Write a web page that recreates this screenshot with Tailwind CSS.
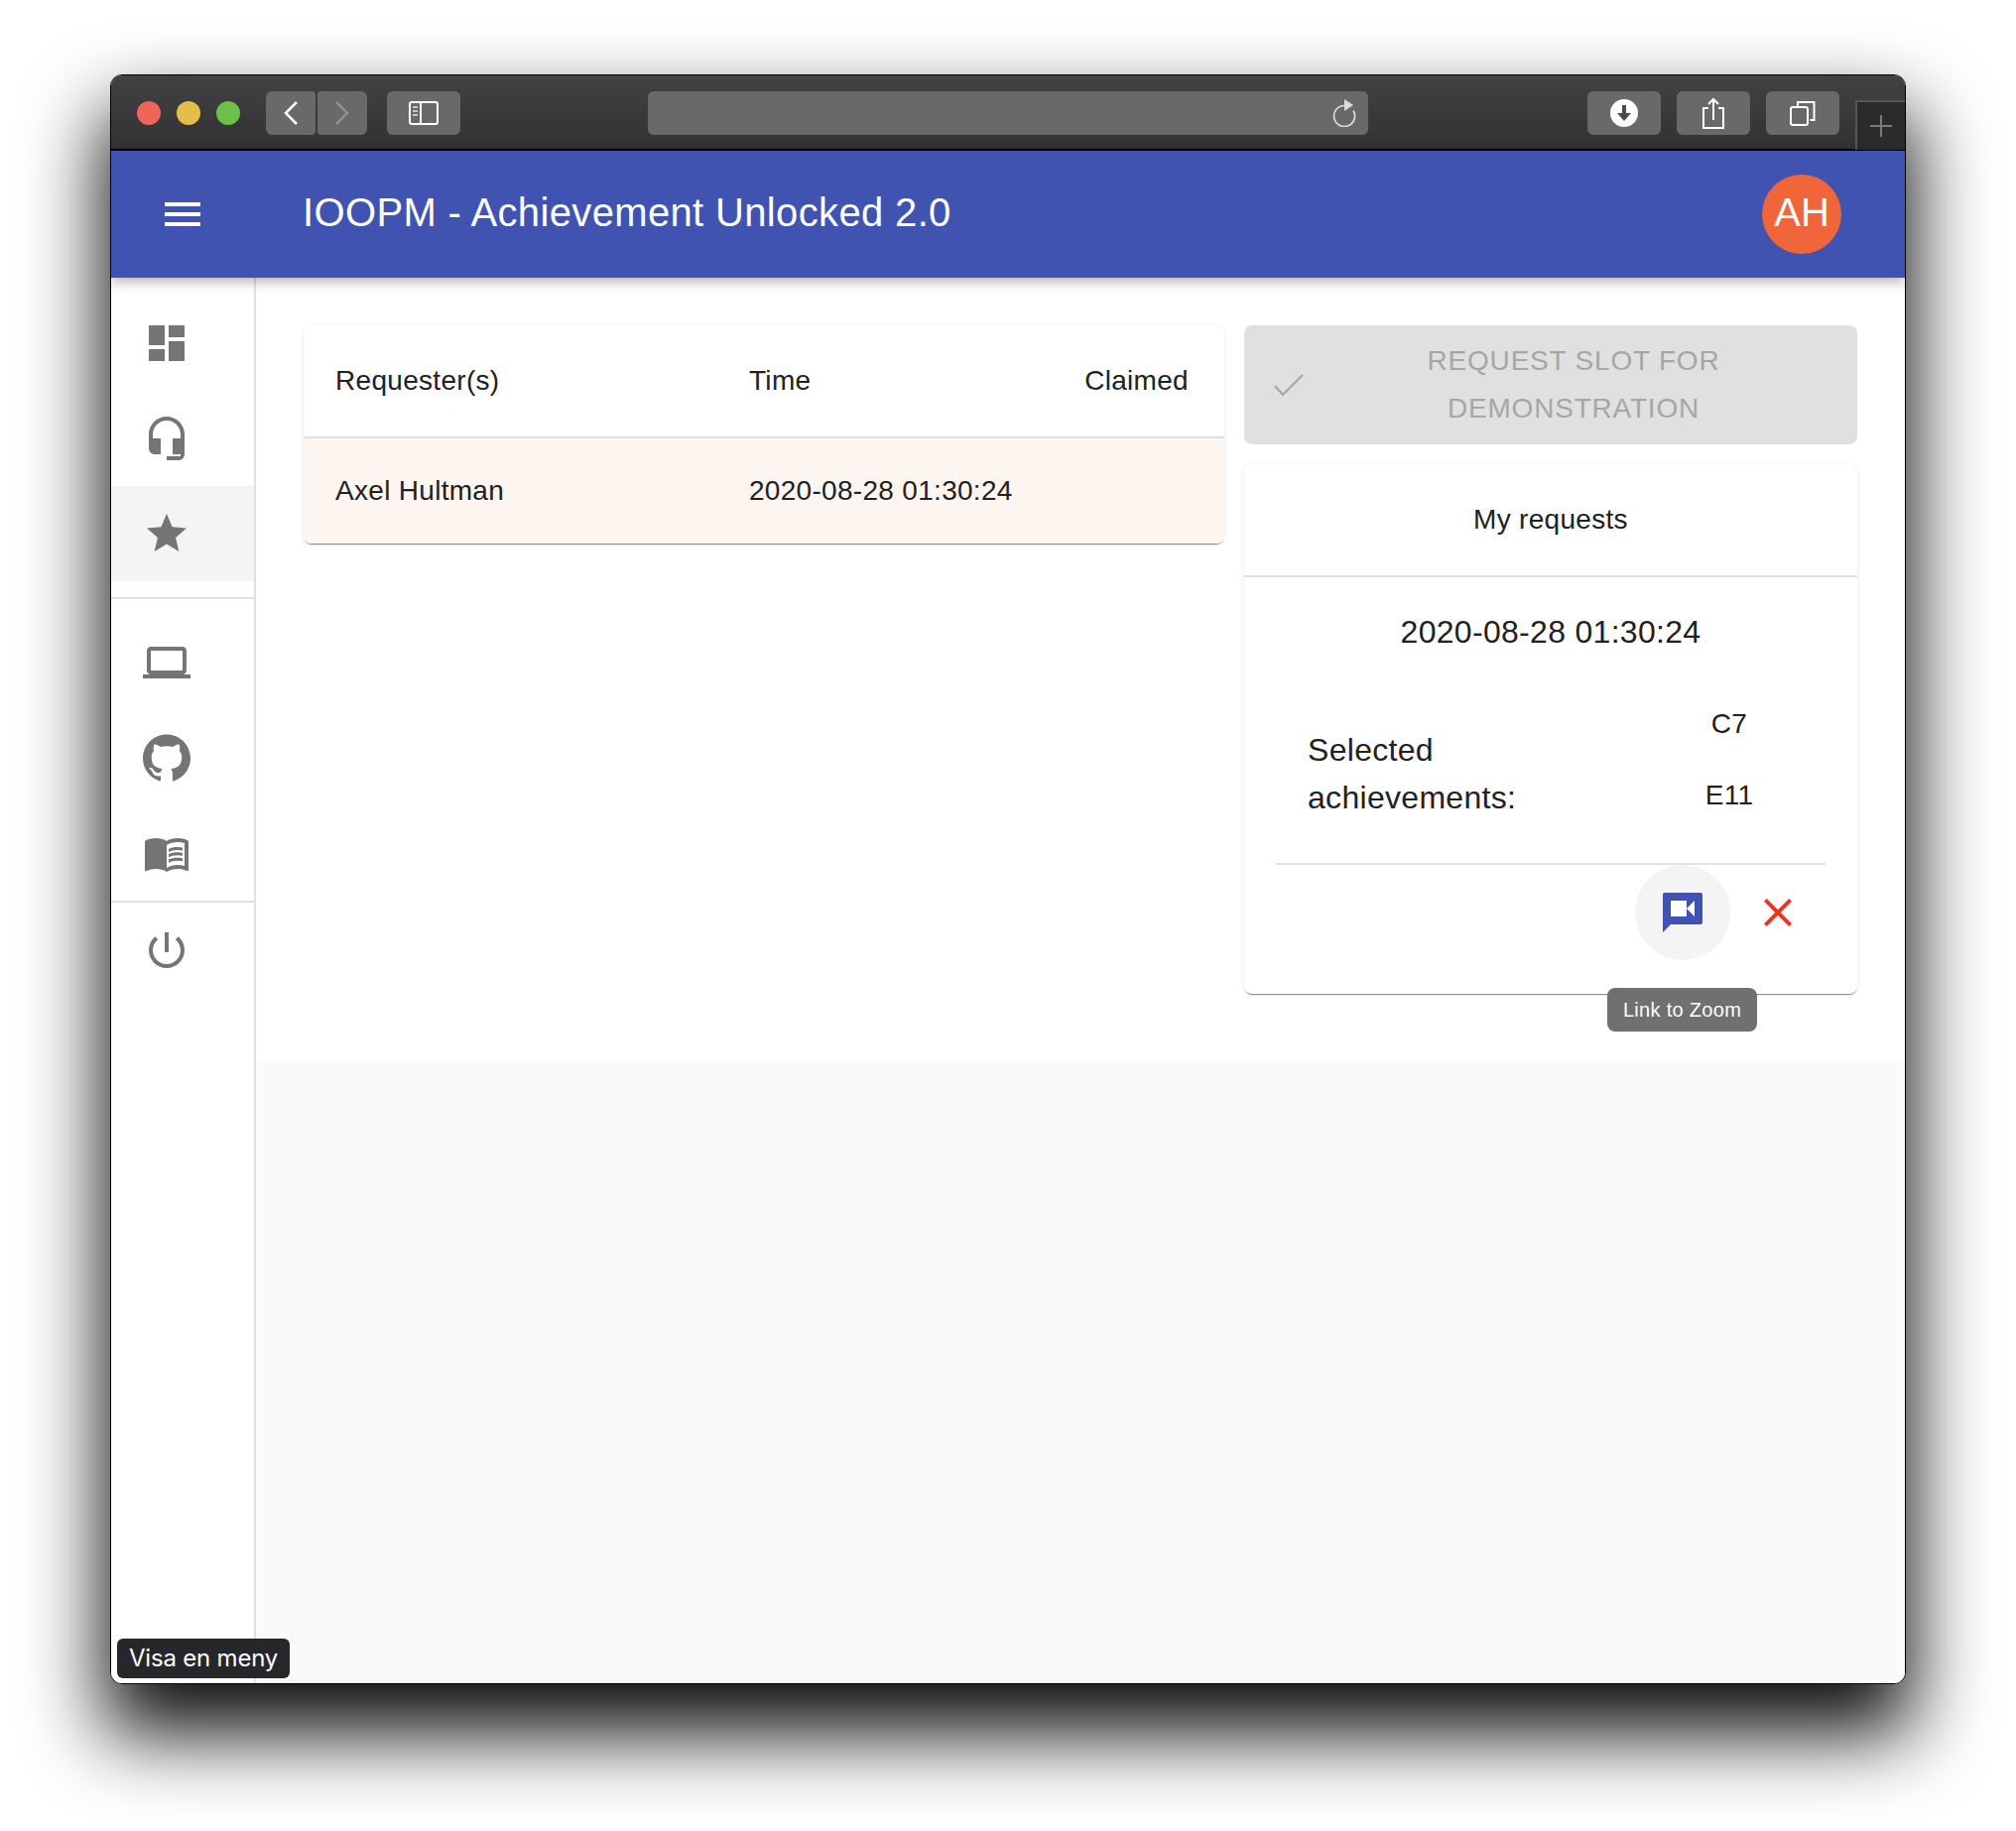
<!DOCTYPE html>
<html lang="en">
<head>
    <meta charset="UTF-8">
    <title>IOOPM - Achievement Unlocked 2.0</title>
    <script src="https://cdn.jsdelivr.net/npm/@tailwindcss/browser@4"></script>
</head>
<body class="bg-white w-[2032px] h-[1846px] overflow-hidden font-['Liberation_Sans',sans-serif] tracking-[0.3px] text-[#212121]">

    <div class="relative ml-[111px] mt-[75px] w-[1810px] h-[1623px] border border-black rounded-[12px] overflow-hidden bg-white flex flex-col shadow-[0_44px_80px_6px_rgba(0,0,0,0.95)]">

        <!-- Safari toolbar -->
        <div class="h-[76px] shrink-0 bg-gradient-to-b from-[#424244] to-[#323234] border-b-2 border-black flex items-start pt-4 pl-[26px] relative">
            <div class="w-6 h-6 mt-[10px] rounded-full bg-[#f0655a]"></div>
            <div class="w-6 h-6 mt-[10px] ml-4 rounded-full bg-[#e4be48]"></div>
            <div class="w-6 h-6 mt-[10px] ml-4 rounded-full bg-[#6cc04a]"></div>

            <div class="w-[50px] h-11 ml-[26px] rounded-l-md rounded-r-sm bg-[#69696b] flex items-center justify-center">
                <svg width="16" height="26" viewBox="0 0 16 26" fill="none" stroke="#fff" stroke-width="2.5"><path d="M14 2L3 13l11 11"/></svg>
            </div>
            <div class="w-[50px] h-11 ml-[2px] rounded-r-md rounded-l-sm bg-[#69696b] flex items-center justify-center">
                <svg width="16" height="26" viewBox="0 0 16 26" fill="none" stroke="#8f8f91" stroke-width="2.5"><path d="M2 2l11 11L2 24"/></svg>
            </div>
            <div class="w-[74px] h-11 ml-5 rounded-md bg-[#69696b] flex items-center justify-center">
                <svg width="30" height="24" viewBox="0 0 30 24" fill="none" stroke="#fff" stroke-width="2"><rect x="1" y="1" width="28" height="22" rx="2"/><path d="M12 1v22"/><path d="M4 6h5M4 10h5M4 14h5" stroke="#c8c8c8"/></svg>
            </div>

            <div class="w-[726px] h-11 ml-[189px] rounded-md bg-[#69696b] flex items-center justify-end pr-3">
                <svg width="24" height="28" viewBox="0 0 24 28" fill="none" stroke="#dcdcdc" stroke-width="1.7"><path d="M12 6.500A10.500 10.500 0 1 0 21 11.500"/><path d="M12 0l9 6-9 6z" fill="#dcdcdc" stroke="none"/></svg>
            </div>

            <div class="w-[74px] h-11 ml-[221px] rounded-md bg-[#69696b] flex items-center justify-center">
                <svg width="28" height="28" viewBox="0 0 28 28"><circle cx="14" cy="14" r="14" fill="#fff"/><path d="M12 6h4v8h5l-7 8-7-8h5z" fill="#4b4b4d"/></svg>
            </div>
            <div class="w-[74px] h-11 ml-4 rounded-md bg-[#69696b] flex items-center justify-center">
                <svg width="24" height="32" viewBox="0 0 24 32" fill="none" stroke="#fff" stroke-width="2"><path d="M7 11H2v20h20V11h-5"/><path d="M12 23V2M7 7l5-5 5 5"/></svg>
            </div>
            <div class="w-[74px] h-11 ml-4 rounded-md bg-[#69696b] flex items-center justify-center">
                <svg width="26" height="26" viewBox="0 0 26 26" fill="none" stroke="#fff" stroke-width="2"><rect x="1" y="7" width="17" height="18" rx="2"/><path d="M8 6V2h16.500v18h-4"/></svg>
            </div>

            <div class="absolute right-0 top-[25px] w-[50px] h-[50px] bg-[#2b2b2c] border-l-2 border-t-2 border-[#565658] flex items-center justify-center">
                <svg width="22" height="22" viewBox="0 0 22 22" stroke="#7a7a7c" stroke-width="2"><path d="M11 0v22M0 11h22"/></svg>
            </div>
        </div>

        <!-- App bar -->
        <header class="h-[128px] shrink-0 bg-[#4053b0] relative z-10 flex items-center pl-12 pr-16 shadow-[0_4px_12px_rgba(0,0,0,0.3)]">
            <svg width="48" height="48" viewBox="0 0 24 24" fill="#fff"><path d="M3 18h18v-2H3v2zm0-5h18v-2H3v2zm0-7v2h18V6H3z"/></svg>
            <h1 class="ml-[97px] mb-1 text-[40px] leading-none font-normal text-white tracking-[0.35px]">IOOPM - Achievement Unlocked 2.0</h1>
            <div class="ml-auto w-20 h-20 pb-1 rounded-full bg-[#f06539] text-white text-[40px] flex items-center justify-center tracking-normal">AH</div>
        </header>

        <div class="flex flex-1 min-h-0">
            <!-- Sidebar -->
            <nav class="w-[146px] shrink-0 bg-white border-r-2 border-[#e0e0e0] pt-[18px]">
                <div class="h-24 pl-8 flex items-center">
                    <svg width="48" height="48" viewBox="0 0 24 24" fill="#757575"><path d="M3 13h8V3H3v10zm0 8h8v-6H3v6zm10 0h8V11h-8v10zm0-18v6h8V3h-8z"/></svg>
                </div>
                <div class="h-24 pl-8 flex items-center">
                    <svg width="48" height="48" viewBox="0 0 24 24" fill="#757575"><path d="M12 1c-4.970 0-9 4.030-9 9v7c0 1.660 1.340 3 3 3h3v-8H5v-2c0-3.870 3.130-7 7-7s7 3.130 7 7v2h-4v8h4v1h-7v2h6c1.660 0 3-1.340 3-3V10c0-4.970-4.030-9-9-9z"/></svg>
                </div>
                <div class="h-24 pl-8 flex items-center bg-[#f4f4f4]">
                    <svg width="48" height="48" viewBox="0 0 24 24" fill="#757575"><path d="M12 17.270L18.180 21l-1.640-7.030L22 9.240l-7.190-.610L12 2 9.190 8.630 2 9.240l5.460 4.730L5.820 21z"/></svg>
                </div>
                <div class="h-[2px] bg-[#e0e0e0] my-4"></div>
                <div class="h-24 pl-8 flex items-center">
                    <svg width="48" height="48" viewBox="0 0 24 24" fill="#757575"><path d="M20 18c1.100 0 1.990-.9 1.990-2L22 6c0-1.100-.9-2-2-2H4c-1.100 0-2 .9-2 2v10c0 1.100.9 2 2 2H0v2h24v-2h-4zM4 6h16v10H4V6z"/></svg>
                </div>
                <div class="h-24 pl-8 flex items-center">
                    <svg width="48" height="48" viewBox="0 0 24 24" fill="#757575"><path d="M12 .297c-6.630 0-12 5.373-12 12 0 5.303 3.438 9.800 8.205 11.385.6.113.82-.258.82-.577 0-.285-.01-1.040-.015-2.040-3.338.724-4.042-1.610-4.042-1.610C4.422 18.070 3.633 17.700 3.633 17.700c-1.087-.744.084-.729.084-.729 1.205.084 1.838 1.236 1.838 1.236 1.070 1.835 2.809 1.305 3.495.998.108-.776.417-1.305.76-1.605-2.665-.3-5.466-1.332-5.466-5.930 0-1.310.465-2.380 1.235-3.220-.135-.303-.54-1.523.105-3.176 0 0 1.005-.322 3.300 1.230.96-.267 1.980-.399 3-.405 1.020.006 2.040.138 3 .405 2.280-1.552 3.285-1.230 3.285-1.230.645 1.653.24 2.873.12 3.176.765.84 1.230 1.910 1.230 3.220 0 4.610-2.805 5.625-5.475 5.920.42.36.81 1.096.81 2.220 0 1.606-.015 2.896-.015 3.286 0 .315.21.69.825.57C20.565 22.092 24 17.592 24 12.297c0-6.627-5.373-12-12-12"/></svg>
                </div>
                <div class="h-24 pl-8 flex items-center">
                    <svg width="48" height="48" viewBox="0 0 24 24" fill="#757575"><path d="M21 5c-1.110-.35-2.330-.5-3.500-.5-1.950 0-4.050.4-5.500 1.500-1.450-1.100-3.550-1.500-5.500-1.500S2.450 4.900 1 6v14.650c0 .25.25.5.5.5.1 0 .15-.05.25-.05C3.100 20.450 5.050 20 6.500 20c1.950 0 4.050.4 5.500 1.500 1.350-.85 3.800-1.500 5.500-1.500 1.650 0 3.350.3 4.750 1.050.1.05.15.05.25.05.25 0 .5-.25.5-.5V6c-.6-.45-1.250-.75-2-1zm0 13.500c-1.100-.35-2.300-.5-3.500-.5-1.700 0-4.150.65-5.500 1.500V8c1.350-.85 3.800-1.500 5.500-1.500 1.200 0 2.400.15 3.500.5v11.500z"/><path d="M17.500 10.500c.88 0 1.730.09 2.500.26V9.240c-.79-.15-1.640-.24-2.500-.24-1.700 0-3.240.29-4.500.83v1.660c1.130-.64 2.700-.99 4.500-.99zM13 12.490v1.660c1.130-.64 2.700-.99 4.500-.99.88 0 1.730.09 2.500.26V11.900c-.79-.15-1.640-.24-2.500-.24-1.700 0-3.240.3-4.500.83zM17.500 14.330c-1.700 0-3.240.29-4.500.83v1.660c1.130-.64 2.700-.99 4.500-.99.88 0 1.730.09 2.500.26v-1.520c-.79-.16-1.640-.24-2.500-.24z"/></svg>
                </div>
                <div class="h-[2px] bg-[#e0e0e0]"></div>
                <div class="h-24 pl-8 flex items-center">
                    <svg width="48" height="48" viewBox="0 0 24 24" fill="#757575"><path d="M13 3h-2v10h2V3zm4.830 2.170l-1.420 1.420C17.990 7.860 19 9.810 19 12c0 3.870-3.130 7-7 7s-7-3.130-7-7c0-2.190 1.010-4.140 2.580-5.420L6.170 5.170C4.230 6.820 3 9.260 3 12c0 4.970 4.030 9 9 9s9-4.030 9-9c0-2.740-1.230-5.180-3.170-6.830z"/></svg>
                </div>
            </nav>

            <!-- Main -->
            <main class="flex-1 bg-[#fafafa]">
                <div class="h-[790px] bg-white pt-12 pl-12 flex items-start gap-5">

                    <!-- Queue table -->
                    <div class="w-[928px] rounded-lg bg-white overflow-hidden text-[28px] shadow-[0_2px_1px_-1px_rgba(0,0,0,0.45),0_1px_4px_rgba(0,0,0,0.1)]">
                        <div class="h-[114px] border-b-2 border-[#e0e0e0] flex items-center pl-[32px]">
                            <span class="w-[417px]">Requester(s)</span>
                            <span>Time</span>
                            <span class="ml-auto pr-[36px]">Claimed</span>
                        </div>
                        <div class="h-[106px] bg-[#fdf5f0] flex items-center pl-[32px]">
                            <span class="w-[417px]">Axel Hultman</span>
                            <span>2020-08-28 01:30:24</span>
                        </div>
                    </div>

                    <!-- Right column -->
                    <div class="w-[618px] flex flex-col gap-5">
                        <button class="h-[120px] rounded-lg bg-[#e0e0e0] text-[#a6a6a6] text-[28px] leading-[48px] tracking-[0.8px] flex items-center pl-[30px]">
                            <svg width="30" height="24" viewBox="0 0 30 24" fill="none" stroke="#a6a6a6" stroke-width="2.2"><path d="M1 13l8 9L29 2"/></svg>
                            <span class="w-[470px] ml-[37px] text-center">REQUEST SLOT FOR<br>DEMONSTRATION</span>
                        </button>

                        <div class="relative h-[534px] rounded-lg bg-white shadow-[0_2px_1px_-1px_rgba(0,0,0,0.45),0_1px_4px_rgba(0,0,0,0.1)]">
                            <div class="h-[114px] border-b-2 border-[#e0e0e0] flex items-center justify-center text-[28px]">My requests</div>

                            <div class="text-center text-[32px] leading-[48px] pt-[31px]">2020-08-28 01:30:24</div>

                            <div class="flex h-[209px] pt-[41px] pl-16">
                                <div class="w-[300px] pt-[30px] text-[32px] leading-[48px]">Selected<br>achievements:</div>
                                <div class="w-[250px] text-[28px] text-center flex flex-col gap-4">
                                    <div class="h-14 flex items-center justify-center">C7</div>
                                    <div class="h-14 flex items-center justify-center">E11</div>
                                </div>
                            </div>

                            <div class="h-[2px] mx-8 bg-[#e0e0e0]"></div>

                            <div class="flex justify-end pr-8">
                                <div class="w-24 h-24 rounded-full bg-[#f4f4f4] flex items-center justify-center">
                                    <svg width="48" height="48" viewBox="0 0 24 24"><path d="M3 2h18c.55 0 1 .45 1 1v14c0 .55-.45 1-1 1H6l-4 4V3c0-.55.45-1 1-1z" fill="#4053b0"/><path d="M6 6h8v8H6zM14 10l4-4v8z" fill="#fff"/></svg>
                                </div>
                                <div class="w-24 h-24 flex items-center justify-center">
                                    <svg width="48" height="48" viewBox="0 0 24 24" fill="#f13223"><path d="M19 6.410L17.590 5 12 10.590 6.410 5 5 6.410 10.590 12 5 17.590 6.410 19 12 13.410 17.590 19 19 17.590 13.410 12z"/></svg>
                                </div>
                            </div>

                            <div class="absolute left-[366px] top-[528px] w-[151px] h-11 rounded-lg bg-[#707070] text-white text-[20px] flex items-center justify-center">Link to Zoom</div>
                        </div>
                    </div>
                </div>
            </main>
        </div>

        <div class="absolute left-[6px] bottom-[5px] h-10 px-3 rounded-md bg-[#26272b] text-white text-[24px] tracking-[-0.2px] font-['Inter',sans-serif] flex items-center">Visa en meny</div>
    </div>

</body>
</html>
